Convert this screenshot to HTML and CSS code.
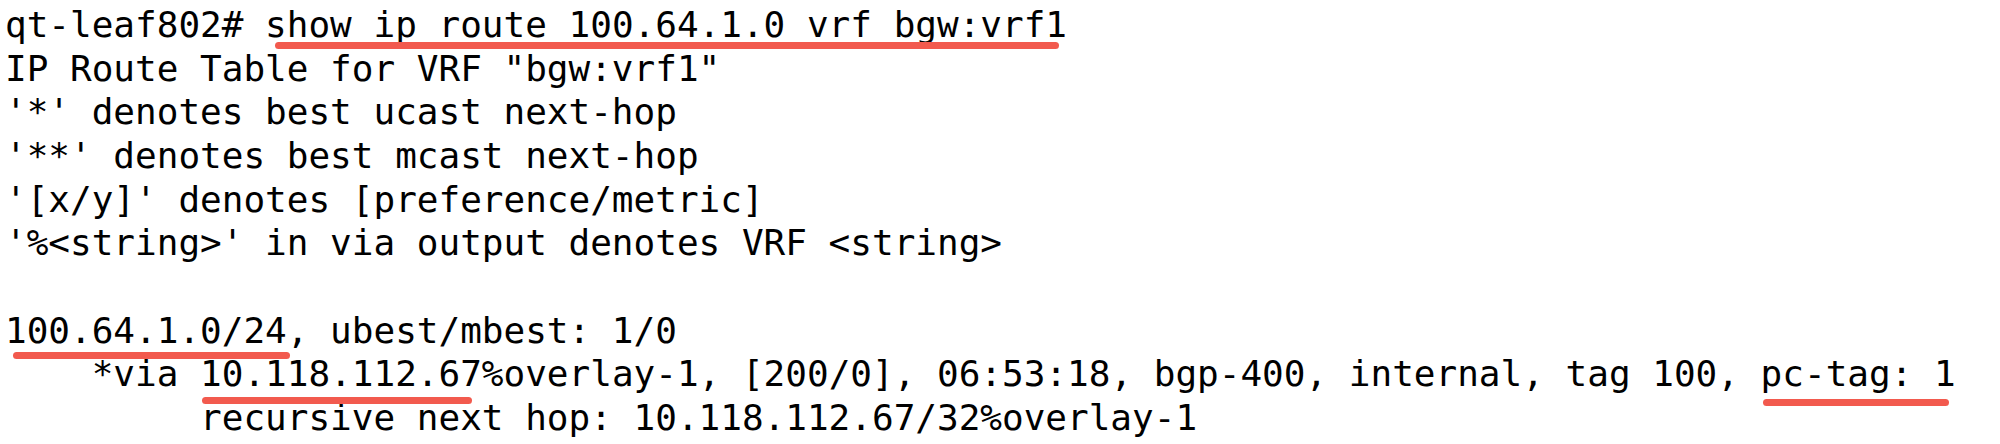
FILE: index.html
```html
<!DOCTYPE html>
<html>
<head>
<meta charset="utf-8">
<link rel="stylesheet" href="styles.css">
</head>
<body>
<div class="term">
<div class="line">qt-leaf802# <span class="mark mark-cmd">show ip route 100.64.1.0 vrf bgw:vrf1</span></div>
<div class="line">IP Route Table for VRF "bgw:vrf1"</div>
<div class="line">'*' denotes best ucast next-hop</div>
<div class="line">'**' denotes best mcast next-hop</div>
<div class="line">'[x/y]' denotes [preference/metric]</div>
<div class="line">'%&lt;string&gt;' in via output denotes VRF &lt;string&gt;</div>
<div class="line"> </div>
<div class="line"><span class="mark mark-net">100.64.1.0/24</span>, ubest/mbest: 1/0</div>
<div class="line">    *via <span class="mark mark-nh">10.118.112.67</span>%overlay-1, [200/0], 06:53:18, bgp-400, internal, tag 100, <span class="mark mark-tag">pc-tag: 1</span></div>
<div class="line">         recursive next hop: 10.118.112.67/32%overlay-1</div>
</div>
</body>
</html>
```
FILE: styles.css
```css
html, body {
  margin: 0;
  padding: 0;
  background: #ffffff;
}
.term {
  padding: 3px 0 0 5px;
  font-family: "DejaVu Sans Mono", "Liberation Mono", monospace;
  font-size: 36px;
  line-height: 43.67px;
  color: #000000;
}
.line {
  white-space: pre;
  height: 43.67px;
}
.mark {
  position: relative;
}
.mark::after {
  content: "";
  position: absolute;
  height: 7px;
  background: #f25a4e;
  border-radius: 4px;
}
.mark-cmd::after {
  left: 10px;
  right: 8px;
  top: 38px;
}
.mark-net::after {
  left: 8px;
  right: -3px;
  top: 42px;
}
.mark-nh::after {
  left: 2px;
  right: 10px;
  top: 44px;
}
.mark-tag::after {
  left: 2px;
  right: 7px;
  top: 46px;
}
```
